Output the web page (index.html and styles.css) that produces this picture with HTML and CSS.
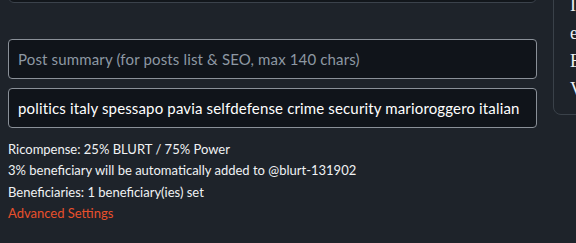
FILE: index.html
```html
<!DOCTYPE html>
<html lang="it">
<head>
<meta charset="utf-8">
<title>Editor</title>
<link rel="stylesheet" href="styles.css">
</head>
<body>
<div class="page">
  <main class="editor">
    <div class="body-box"></div>
    <input class="field" type="text" placeholder="Post summary (for posts list &amp; SEO, max 140 chars)">
    <input class="field tags" type="text" value="politics italy spessapo pavia selfdefense crime security marioroggero italian">
    <div class="info">
      <p>Ricompense: 25% BLURT / 75% Power</p>
      <p>3% beneficiary will be automatically added to @blurt-131902</p>
      <p>Beneficiaries: 1 beneficiary(ies) set</p>
      <a class="advanced" href="#">Advanced Settings</a>
    </div>
  </main>
  <aside class="preview">
    <p>I</p>
    <p>e</p>
    <p>E</p>
    <p>V</p>
  </aside>
</div>
</body>
</html>
```

FILE: styles.css
```css
* { box-sizing: border-box; }
html, body {
  margin: 0;
  background: #1e232a;
  overflow: hidden;
}
body {
  font-family: "Lato", "Liberation Sans", sans-serif;
  color: #e6e8ea;
}
.page {
  display: flex;
  gap: 16px;
  padding-left: 8px;
  margin-top: -40px;
  align-items: flex-start;
}
.editor {
  flex: none;
  width: 529px;
  display: flex;
  flex-direction: column;
}
.body-box {
  height: 43px;
  border: 1px solid #3b424b;
  border-radius: 0 0 6px 6px;
  background: #12161b;
  margin-bottom: 36px;
}
.field {
  display: block;
  width: 100%;
  height: 40px;
  padding: 0 9px;
  background: #10141a;
  border: 1px solid #8a9098;
  border-radius: 4px;
  font-family: inherit;
  font-size: 15px;
  letter-spacing: 0.15px;
  color: #ffffff;
  outline: none;
}
.field::placeholder { color: #8d98a3; }
.tags { margin-top: 9px; }
.info {
  margin-top: 11px;
  font-size: 13px;
  line-height: 21.3px;
  color: #f0f2f4;
}
.info p { margin: 0; }
.advanced {
  color: #e8502c;
  text-decoration: none;
}
.preview {
  flex: none;
  width: 300px;
  border: 1px solid #3a4149;
  border-radius: 8px;
  padding: 40px 16px 11px;
  font-family: "Liberation Serif", "DejaVu Serif", serif;
  font-size: 18px;
  line-height: 28px;
  color: #eef0f2;
  margin-top: -10px;
}
.preview p { margin: 0; }
```
